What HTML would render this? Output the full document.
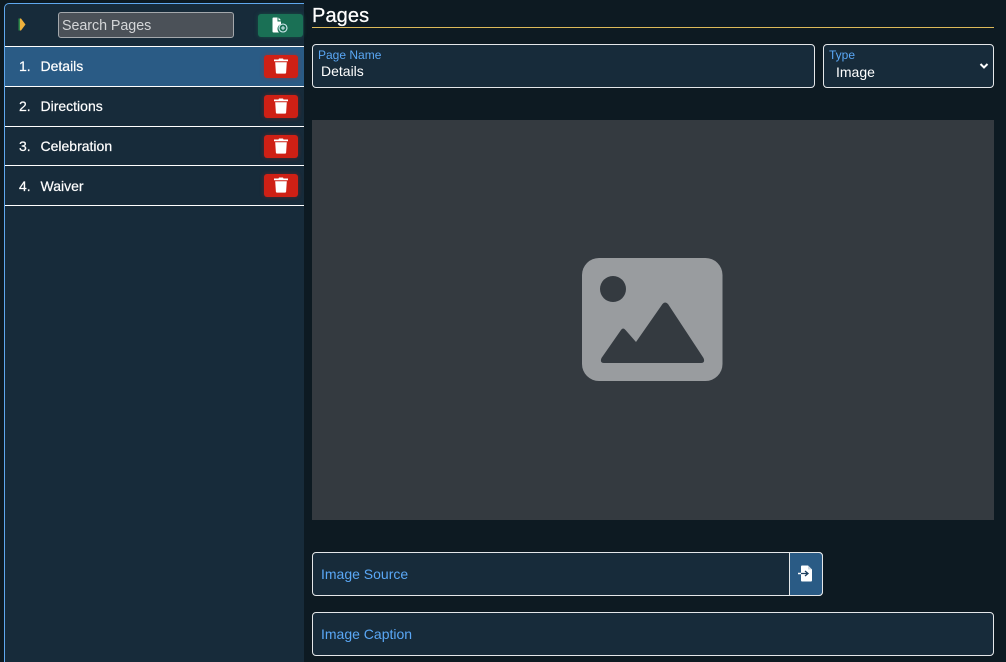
<!DOCTYPE html>
<html><head><meta charset="utf-8"><style>
*{box-sizing:border-box;margin:0;padding:0}
html,body{width:1006px;height:662px;overflow:hidden;background:#0d1a22;font-family:"Liberation Sans",sans-serif;color:#fff}
.abs{position:absolute}
#side{left:4px;top:3px;width:300px;height:659px;background:#172b3a;border:1px solid #5fa8ee;border-width:1px 0 0 1px;border-top-left-radius:5px}
.search{left:58px;top:12px;width:176px;height:26px;background:#4b5158;border:1px solid #a4a8ac;border-radius:3px;color:#d4d6d8;font-size:14.3px;line-height:26px;padding-left:3px;letter-spacing:-.05px}
.add{left:258px;top:14px;width:45px;height:23px;background:#1a7055;border-radius:3px;box-shadow:0 0 4px #1a705588}
.line{left:5px;width:299px;height:1px;background:#fff}
.row{left:5px;width:299px;height:39px;font-size:14px;line-height:39px;color:#fff;-webkit-text-stroke:.2px #fff}
.num{position:absolute;left:14px}.nm{position:absolute;left:35.500px}
.del{position:absolute;left:259px;width:34px;height:23px;background:#cf2015;border-radius:3px;box-shadow:0 0 4px #cf201566}
.fld{background:#172b3a;border:1px solid #e4e7e9;border-radius:4px}
.lb{color:#5aa7f5}
</style></head><body>
<div class="abs" id="side"></div>
<svg class="abs" style="left:18px;top:18px" width="8" height="13"><path d="M0.500 0.500h1.500v12H0.500z" fill="#2f8a4a"/><path d="M2 0.500h1l4.500 6-4.500 6H2z" fill="#f0b23c"/></svg>
<div class="abs search">Search Pages</div>
<div class="abs add"><svg style="position:absolute;left:14px;top:3px" width="18" height="17" viewBox="0 0 18 17"><path d="M0.500 1.500a1 1 0 0 1 1-1H5.500v4h3.500v2.600a5 5 0 0 0-2 8.400H1.500a1 1 0 0 1-1-1z" fill="#fff"/><path d="M6.500 .5l2.500 2.800H6.500z" fill="#fff"/><circle cx="11" cy="11" r="4" fill="#1a7055" stroke="#d5ecf3" stroke-width="1.100"/><path d="M11 9v4M9 11h4" stroke="#d5ecf3" stroke-width="1"/></svg></div>

<div class="abs" style="left:5px;top:47px;width:299px;height:39px;background:#2a5b85"></div>
<div class="abs line" style="top:46px"></div><div class="abs line" style="top:86px"></div><div class="abs line" style="top:126px"></div><div class="abs line" style="top:165px"></div><div class="abs line" style="top:205px"></div>

<div class="abs row" style="top:47px"><span class="num">1.</span><span class="nm">Details</span><div class="del" style="top:8px"><svg style="position:absolute;left:10px;top:3px" width="14" height="16" viewBox="0 0 14 16"><path d="M0 1.500h4.500l.5-1h4l.5 1H14v1.800H0zM1.200 4.200h11.600l-.7 10.500a1 1 0 0 1-1 .9H2.900a1 1 0 0 1-1-.9z" fill="#fff"/></svg></div></div>
<div class="abs row" style="top:87px"><span class="num">2.</span><span class="nm">Directions</span><div class="del" style="top:8px"><svg style="position:absolute;left:10px;top:3px" width="14" height="16" viewBox="0 0 14 16"><path d="M0 1.500h4.500l.5-1h4l.5 1H14v1.800H0zM1.200 4.200h11.600l-.7 10.500a1 1 0 0 1-1 .9H2.900a1 1 0 0 1-1-.9z" fill="#fff"/></svg></div></div>
<div class="abs row" style="top:127px"><span class="num">3.</span><span class="nm">Celebration</span><div class="del" style="top:8px"><svg style="position:absolute;left:10px;top:3px" width="14" height="16" viewBox="0 0 14 16"><path d="M0 1.500h4.500l.5-1h4l.5 1H14v1.800H0zM1.200 4.200h11.600l-.7 10.500a1 1 0 0 1-1 .9H2.900a1 1 0 0 1-1-.9z" fill="#fff"/></svg></div></div>
<div class="abs row" style="top:167px"><span class="num">4.</span><span class="nm">Waiver</span><div class="del" style="top:7px"><svg style="position:absolute;left:10px;top:3px" width="14" height="16" viewBox="0 0 14 16"><path d="M0 1.500h4.500l.5-1h4l.5 1H14v1.800H0zM1.200 4.200h11.600l-.7 10.500a1 1 0 0 1-1 .9H2.900a1 1 0 0 1-1-.9z" fill="#fff"/></svg></div></div>

<div class="abs" style="left:312px;top:3px;font-size:20px;line-height:26px;-webkit-text-stroke:.25px #fff;letter-spacing:.1px">Pages</div>
<div class="abs" style="left:312px;top:27px;width:682px;height:1px;background:#dcb95a"></div>

<div class="abs fld" style="left:312px;top:44px;width:503px;height:44px"></div>
<div class="abs lb" style="left:318px;top:48px;font-size:12px;line-height:14px">Page Name</div>
<div class="abs" style="left:321px;top:63px;font-size:14px;line-height:16px">Details</div>

<div class="abs fld" style="left:823px;top:44px;width:171px;height:44px"></div>
<div class="abs lb" style="left:829px;top:48px;font-size:12px;line-height:14px">Type</div>
<div class="abs" style="left:836px;top:64px;font-size:14px;line-height:16px">Image</div>
<svg class="abs" style="left:979px;top:61px" width="10" height="10"><path d="M1.500 3l3.500 3.500L8.500 3" fill="none" stroke="#fff" stroke-width="2"/></svg>

<div class="abs" style="left:312px;top:120px;width:682px;height:400px;background:#343a40"></div>
<svg class="abs" style="left:582px;top:258px" width="141" height="123" viewBox="0 0 141 123"><rect width="140.500" height="123" rx="17" fill="#999c9f"/><circle cx="31" cy="31" r="13" fill="#343a40"/><path d="M19.500 100L39 72Q41 69 43.500 72L54 84L80.500 46Q83 43 86 46L121.500 100Q123.500 105 119 105H22Q17.500 105 19.500 100z" fill="#343a40"/></svg>

<div class="abs fld" style="left:312px;top:552px;width:511px;height:44px"></div>
<div class="abs" style="left:789px;top:552px;width:34px;height:44px;background:#2a5b85;border:1px solid #e4e7e9;border-radius:0 4px 4px 0"></div>
<svg class="abs" style="left:798px;top:565px" width="15" height="17" viewBox="0 0 15 17"><path d="M3 1.500a1 1 0 0 1 1-1h6l4 4v11a1 1 0 0 1-1 1H4a1 1 0 0 1-1-1z" fill="#fff"/><path d="M10 .5l4 4h-4z" fill="#cfd8df"/><path d="M3 8.500h6.500M7 6l3 2.500L7 11" fill="none" stroke="#1d3f5e" stroke-width="1.300"/><path d="M0 8.500h3" stroke="#fff" stroke-width="1.500"/></svg>
<div class="abs lb" style="left:321px;top:566px;font-size:14px;line-height:16px">Image Source</div>

<div class="abs fld" style="left:312px;top:612px;width:682px;height:44px"></div>
<div class="abs lb" style="left:321px;top:626px;font-size:14px;line-height:16px">Image Caption</div>
</body></html>
